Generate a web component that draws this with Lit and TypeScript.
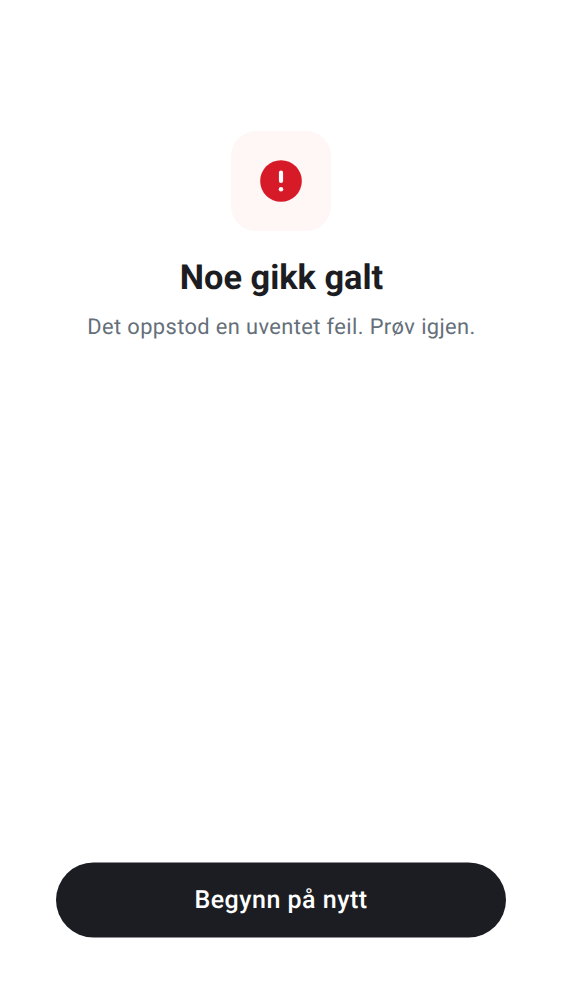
import { LitElement, html, css } from "lit";
import { customElement } from "lit/decorators.js";

@customElement("app-root")
export class AppRoot extends LitElement {
  static styles = css`
    :host { display: flex; flex-direction: column; justify-content: space-between; box-sizing: border-box; height: 1000px; padding: 131px 56px 62px; background: #fff; font-family: Roboto, sans-serif; text-rendering: geometricPrecision; }
    .message { display: flex; flex-direction: column; align-items: center; text-align: center; white-space: nowrap; }
    .badge { display: flex; align-items: center; justify-content: center; width: 100px; height: 100px; border-radius: 25px; background: #fff6f6; }
    .icon { display: block; width: 50px; height: 50px; }
    h1 { margin: 25px 0 0; padding-left: 1px; font-size: 34.375px; line-height: 44px; font-weight: 660; color: #1c1d22; }
    p { margin: 12px 0 0; padding-left: 1px; font-size: 21.875px; font-weight: 370; line-height: 32px; letter-spacing: 0.38px; color: #656f7a; }
    button { width: 100%; height: 75px; border: 0; border-radius: 37.5px; padding: 1px 0 0; background: #1c1d22; color: #fff; font: 500 25px/30px Roboto, sans-serif; letter-spacing: 0.5px; text-rendering: inherit; transform: translateY(-0.5px); }
  `;

  render() {
    return html`
      <main class="message">
        <div class="badge">
          <svg class="icon" viewBox="0 0 24 24" aria-hidden="true">
            <circle cx="12" cy="12" r="10" fill="#d71a28" />
            <path d="M12 8v4" stroke="#fff" stroke-width="2" stroke-linecap="round" />
            <circle cx="12" cy="16" r="1.08" fill="#fff" />
          </svg>
        </div>
        <h1>Noe gikk galt</h1>
        <p>Det oppstod en uventet feil. Prøv igjen.</p>
      </main>
      <button type="button">Begynn på nytt</button>
    `;
  }
}
